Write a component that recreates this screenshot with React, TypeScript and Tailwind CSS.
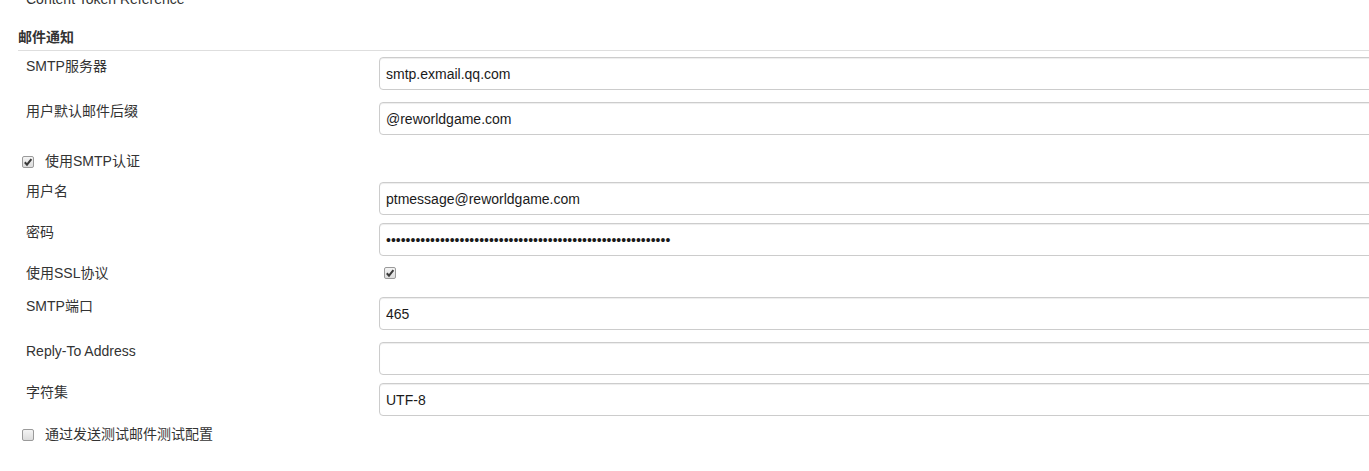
import React from "react";

const font = { fontFamily: '"Liberation Sans", Arial, "Noto Sans CJK SC", sans-serif' };

function Box({ checked = false }: { checked?: boolean }) {
  return (
    <span className="inline-flex w-[12px] h-[12px] shrink-0 items-center justify-center rounded-[2px] border border-[#9a9a9a] bg-gradient-to-b from-[#f4f4f4] to-[#dcdcdc]">
      {checked && (
        <svg width="10" height="10" viewBox="0 0 10 10">
          <path d="M1.8 5.2 L4 7.6 L8.4 2.2" fill="none" stroke="#3a3a3a" strokeWidth="2" />
        </svg>
      )}
    </span>
  );
}

function Field({
  label,
  value = "",
  type = "text",
  className = "",
}: {
  label: string;
  value?: string;
  type?: string;
  className?: string;
}) {
  return (
    <div className={`flex items-start pl-[26px] ${className}`}>
      <div className="w-[353px] shrink-0 pt-[1px] leading-[17px]">{label}</div>
      <input
        type={type}
        readOnly
        value={value}
        style={font}
        className="flex-1 -mr-[30px] h-[33px] rounded-[4px] border border-[#cccccc] bg-white px-[6px] text-[14px] text-[#1a1a1a] shadow-[inset_0_1px_1px_rgba(0,0,0,0.075)] outline-none"
      />
    </div>
  );
}

function CheckRow({ label, checked, className = "" }: { label: string; checked?: boolean; className?: string }) {
  return (
    <div className={`flex h-[17px] items-center pl-[22px] ${className}`}>
      <Box checked={checked} />
      <span className="ml-[11px] leading-[17px]">{label}</span>
    </div>
  );
}

export default function App() {
  return (
    <div style={font} className="h-[471px] w-full overflow-hidden bg-white text-[14px] text-[#333333]">
      <div className="-mt-[9px] pl-[26px] leading-[16px]">Content Token Reference</div>

      <div className="ml-[18px] mt-[22px] border-b border-[#dedede] pb-[4px]">
        <div className="font-bold leading-[17px]">邮件通知</div>
      </div>

      <Field className="mt-[6px]" label="SMTP服务器" value="smtp.exmail.qq.com" />
      <Field className="mt-[12px]" label="用户默认邮件后缀" value="@reworldgame.com" />

      <CheckRow className="mt-[18px]" label="使用SMTP认证" checked />

      <Field className="mt-[12px]" label="用户名" value="ptmessage@reworldgame.com" />
      <Field className="mt-[8px]" label="密码" type="password" value={"x".repeat(58)} />

      <div className="mt-[9px] flex h-[17px] items-center pl-[26px]">
        <div className="w-[353px] shrink-0 leading-[17px]">使用SSL协议</div>
        <span className="ml-[5px]">
          <Box checked />
        </span>
      </div>

      <Field className="mt-[15px]" label="SMTP端口" value="465" />
      <Field className="mt-[12px]" label="Reply-To Address" />
      <Field className="mt-[8px]" label="字符集" value="UTF-8" />

      <CheckRow className="mt-[10px]" label="通过发送测试邮件测试配置" />
    </div>
  );
}
